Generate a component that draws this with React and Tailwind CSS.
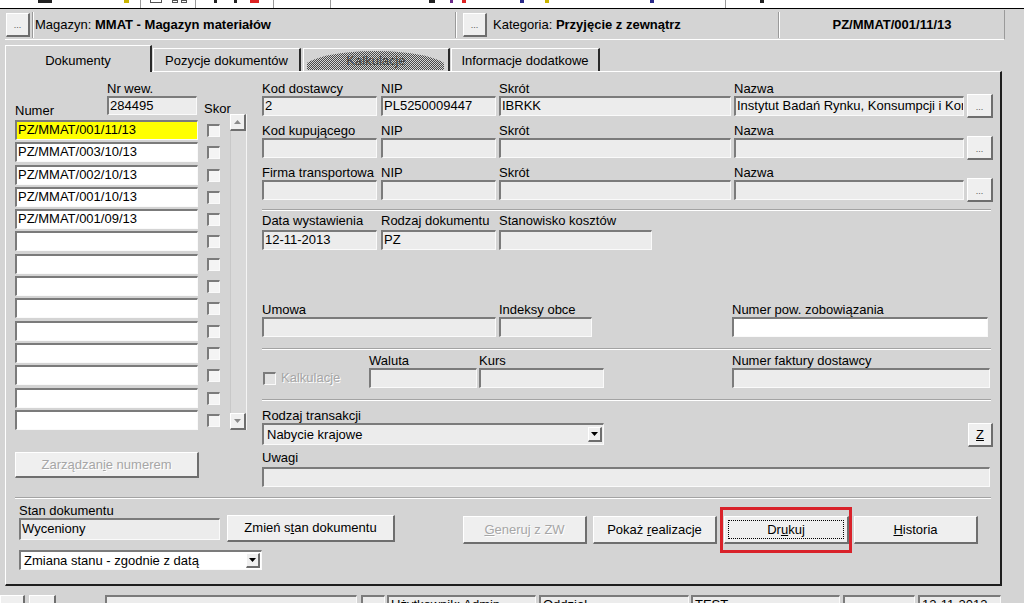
const sunken =
  'border-t-2 border-l-2 border-t-[#7b7b7b] border-l-[#7b7b7b] border-b border-r border-b-[#fafafa] border-r-[#fafafa]';
const raised =
  'border-t border-l border-t-white border-l-white border-b-2 border-r-2 border-b-[#6e6e6e] border-r-[#6e6e6e]';
const disabledText = 'text-[#a6a6a6] [text-shadow:1px_1px_0_#ffffff]';

function Field({ className = '', white = false, children }) {
  return (
    <div
      className={`${sunken} ${white ? 'bg-white' : 'bg-[#ececec]'} pl-[1px] text-[13px] leading-[16px] whitespace-nowrap overflow-hidden ${className}`}
    >
      {children}
    </div>
  );
}

function Btn({ className = '', disabled = false, focus = false, children }) {
  return (
    <div
      className={`relative bg-[#efefef] ${raised} flex items-center justify-center text-[13px] leading-[16px] whitespace-nowrap ${
        disabled ? disabledText : 'text-black'
      } ${className}`}
    >
      {focus && <div className="absolute inset-[3px] border border-dotted border-black" />}
      <span className="relative">{children}</span>
    </div>
  );
}

function Dots() {
  return (
    <Btn className="w-[26px] h-[24px]">
      <span className="text-[9px] leading-none text-[#555]">...</span>
    </Btn>
  );
}

function Arrow({ up = false, color = '#000' }) {
  return (
    <svg width="7" height="4" viewBox="0 0 7 4">
      <path d={up ? 'M0 4h7L3.5 0z' : 'M0 0h7L3.5 4z'} fill={color} />
    </svg>
  );
}

function Select({ className = '', white = false, children }) {
  return (
    <div
      className={`${sunken} ${white ? 'bg-white' : 'bg-[#ececec]'} flex items-center justify-between pl-[3px] pr-[1px] ${className}`}
    >
      <span className="text-[13px] leading-[16px] whitespace-nowrap">{children}</span>
      <div className={`w-[14px] h-[15px] bg-[#efefef] ${raised} flex items-center justify-center`}>
        <Arrow />
      </div>
    </div>
  );
}

function Check({ disabled = false }) {
  return (
    <div
      className={`w-[13px] h-[13px] ${sunken} ${disabled ? 'bg-[#e2e2e2]' : 'bg-[#f4f4f4]'}`}
    />
  );
}

function Sep({ className = '' }) {
  return <div className={`h-[2px] border-t border-t-[#a3a3a3] border-b border-b-white ${className}`} />;
}

function Label({ className = '', children }) {
  return <div className={`text-[13px] leading-[15px] h-[15px] whitespace-nowrap ${className}`}>{children}</div>;
}

const ROWS = [
  'PZ/MMAT/001/11/13',
  'PZ/MMAT/003/10/13',
  'PZ/MMAT/002/10/13',
  'PZ/MMAT/001/10/13',
  'PZ/MMAT/001/09/13',
  '', '', '', '', '', '', '', '', '',
];

const PARTIES = [
  ['Kod dostawcy', '2', 'PL5250009447', 'IBRKK', 'Instytut Badań Rynku, Konsumpcji i Kor'],
  ['Kod kupującego', '', '', '', ''],
  ['Firma transportowa', '', '', '', ''],
];

function Toolbar() {
  return (
    <div className="relative h-[9px] bg-white border-b border-b-black overflow-hidden">
      <div className="absolute left-[38px] top-0 w-[14px] h-[3px] bg-[#222]" />
      <div className="absolute left-[124px] top-0 w-[5px] h-[3px] bg-[#c9b400]" />
      <div className="absolute left-[140px] top-0 w-[1px] h-[8px] bg-[#9a9a9a]" />
      <div className="absolute left-[150px] top-0 w-[12px] h-[3px] border-b border-x border-[#555]" />
      <div className="absolute left-[172px] top-0 w-[6px] h-[3px] border border-[#555]" />
      <div className="absolute left-[181px] top-0 w-[6px] h-[3px] border border-[#555]" />
      <div className="absolute left-[195px] top-0 w-[1px] h-[8px] bg-[#9a9a9a]" />
      <div className="absolute left-[214px] top-0 w-[3px] h-[3px] bg-[#222]" />
      <div className="absolute left-[234px] top-0 w-[3px] h-[3px] bg-[#222]" />
      <div className="absolute left-[250px] top-0 w-[9px] h-[3px] bg-[#d22]" />
      <div className="absolute left-[273px] top-0 w-[1px] h-[8px] bg-[#9a9a9a]" />
      <div className="absolute left-[330px] top-0 w-[1px] h-[8px] bg-[#9a9a9a]" />
      <div className="absolute left-[429px] top-0 w-[6px] h-[3px] bg-[#222]" />
      <div className="absolute left-[450px] top-0 w-[3px] h-[3px] bg-[#6a2a8a]" />
      <div className="absolute left-[462px] top-0 w-[4px] h-[3px] bg-[#d22]" />
      <div className="absolute left-[520px] top-0 w-[4px] h-[3px] bg-[#2a2a8a]" />
      <div className="absolute left-[545px] top-0 w-[4px] h-[3px] bg-[#c9b400]" />
      <div className="absolute left-[650px] top-0 w-[4px] h-[3px] bg-[#2a2a8a]" />
      <div className="absolute left-[725px] top-0 w-[1px] h-[8px] bg-[#9a9a9a]" />
      <div className="absolute left-[760px] top-0 w-[4px] h-[3px] bg-[#222]" />
    </div>
  );
}

function Header() {
  return (
    <div className="ml-[5px] mt-[1px] w-[1000px] h-[30px] flex items-center border-b border-b-white border-r border-r-[#9a9a9a]">
      <div className="ml-[1px]">
        <Btn className="w-[24px] h-[24px]">
          <span className="text-[9px] leading-none text-[#555]">...</span>
        </Btn>
      </div>
      <div className="ml-[2px] w-[2px] h-[26px] border-l border-l-[#9a9a9a] border-r border-r-white" />
      <div className="ml-[1px] w-[420px] whitespace-nowrap">
        Magazyn: <span className="font-bold">MMAT - Magazyn materiałów</span>
      </div>
      <div className="w-[2px] h-[26px] border-l border-l-[#9a9a9a] border-r border-r-white" />
      <div className="ml-[6px]">
        <Btn className="w-[24px] h-[24px]">
          <span className="text-[9px] leading-none text-[#555]">...</span>
        </Btn>
      </div>
      <div className="ml-[6px] w-[285px] whitespace-nowrap">
        Kategoria: <span className="font-bold">Przyjęcie z zewnątrz</span>
      </div>
      <div className="w-[2px] h-[26px] border-l border-l-[#9a9a9a] border-r border-r-white" />
      <div className="flex-1 text-center font-bold">PZ/MMAT/001/11/13</div>
    </div>
  );
}

function Tabs() {
  const tab = 'h-[23px] pt-[4px] flex justify-center border-t border-l border-t-white border-l-white border-r-2 border-r-[#2a2a2a]';
  return (
    <div className="relative z-10 ml-[5px] mt-[5px] h-[26px] flex items-end gap-[1px]">
      <div className="w-[147px] h-[27px] -mb-[1px] pt-[7px] flex justify-center bg-[#d4d4d4] border-t border-l border-t-white border-l-white border-r-2 border-r-[#2a2a2a]">
        Dokumenty
      </div>
      <div className={`w-[148px] ${tab}`}>Pozycje dokumentów</div>
      <div className={`relative w-[147px] ml-[1px] ${tab}`}>
        <div className="absolute left-[3px] right-[4px] top-[2px] bottom-[1px] bg-[image:repeating-conic-gradient(#4a4a4a_0_25%,transparent_0_50%)] bg-[length:2px_2px] [clip-path:ellipse(54%_100%_at_50%_100%)]" />
        <span className="relative text-[#444]">Kalkulacje</span>
      </div>
      <div className={`w-[149px] ${tab}`}>Informacje dodatkowe</div>
    </div>
  );
}

function LeftColumn() {
  return (
    <div className="w-[232px]">
      <div className="h-[48px] flex">
        <div className="w-[92px] flex flex-col justify-end pb-[2px]">
          <Label>Numer</Label>
        </div>
        <div className="w-[90px] pt-[9px]">
          <Label>Nr wew.</Label>
          <Field className="h-[19px] !leading-[15px]">284495</Field>
        </div>
        <div className="pl-[7px] flex flex-col justify-end pb-[4px]">
          <Label>Skor</Label>
        </div>
      </div>
      <div className="flex items-start">
        <div className="w-[183px]">
          {ROWS.map((r, i) => (
            <div key={i} className="h-[22.3px]">
              <Field white className={`h-[20px] ${i === 0 ? '!bg-[#ffff00]' : ''}`}>
                {r}
              </Field>
            </div>
          ))}
        </div>
        <div className="w-[32px]">
          {ROWS.map((_, i) => (
            <div key={i} className="h-[22.3px] pt-[4px] pl-[9px]">
              <Check />
            </div>
          ))}
        </div>
        <div className="w-[17px] h-[316px] -mt-[6px] flex flex-col bg-[#d9d9d9] border-r border-r-[#f4f4f4]">
          <div className={`h-[17px] bg-[#efefef] ${raised} flex items-center justify-center`}>
            <Arrow up color="#8a8a8a" />
          </div>
          <div className="flex-1 border-l border-l-[#c8c8c8]" />
          <div className={`h-[17px] bg-[#efefef] ${raised} flex items-center justify-center`}>
            <Arrow color="#8a8a8a" />
          </div>
        </div>
      </div>
      <Btn disabled className="mt-[20px] w-[184px] h-[26px]">
        Zarządzan<span className="underline">i</span>e numerem
      </Btn>
    </div>
  );
}

function RightColumn() {
  return (
    <div className="ml-[15px] w-[731px] pt-[9px]">
      {PARTIES.map(([label, kod, nip, skrot, nazwa], i) => (
        <div key={label} className={i < 2 ? 'mb-[7px]' : ''}>
          <div className="flex">
            <Label className="w-[119px]">{label}</Label>
            <Label className="w-[118px]">NIP</Label>
            <Label className="w-[235px]">Skrót</Label>
            <Label>Nazwa</Label>
          </div>
          <div className="h-[20px] flex items-center">
            <Field className="w-[115px] h-[20px]">{kod}</Field>
            <Field className="ml-[4px] w-[115px] h-[20px]">{nip}</Field>
            <Field className="ml-[3px] w-[232px] h-[20px]">{skrot}</Field>
            <Field className="ml-[3px] w-[230px] h-[20px]">{nazwa}</Field>
            <div className="ml-[3px]">
              <Dots />
            </div>
          </div>
        </div>
      ))}

      <Sep className="mt-[9px] w-[729px]" />

      <div className="mt-[2px] flex">
        <Label className="w-[119px]">Data wystawienia</Label>
        <Label className="w-[118px]">Rodzaj dokumentu</Label>
        <Label>Stanowisko kosztów</Label>
      </div>
      <div className="mt-[2px] flex">
        <Field className="w-[115px] h-[20px]">12-11-2013</Field>
        <Field className="ml-[4px] w-[115px] h-[20px]">PZ</Field>
        <Field className="ml-[3px] w-[153px] h-[20px]" />
      </div>

      <div className="mt-[52px] flex">
        <Label className="w-[237px]">Umowa</Label>
        <Label className="w-[233px]">Indeksy obce</Label>
        <Label>Numer pow. zobowiązania</Label>
      </div>
      <div className="flex">
        <Field className="w-[234px] h-[20px]" />
        <Field className="ml-[3px] w-[93px] h-[20px]" />
        <Field white className="ml-[140px] w-[256px] h-[20px]" />
      </div>

      <Sep className="mt-[11px] w-[729px]" />

      <div className="mt-[4px] flex">
        <div className="w-[107px]" />
        <Label className="w-[110px] !h-[14px] !leading-[14px]">Waluta</Label>
        <Label className="w-[253px] !h-[14px] !leading-[14px]">Kurs</Label>
        <Label className="!h-[14px] !leading-[14px]">Numer faktury dostawcy</Label>
      </div>
      <div className="h-[20px] flex items-center">
        <div className="w-[107px] flex items-center pl-[1px]">
          <Check disabled />
          <span className={`ml-[5px] ${disabledText}`}>Kalkulacje</span>
        </div>
        <Field className="w-[108px] h-[20px]" />
        <Field className="ml-[2px] w-[125px] h-[20px]" />
        <Field className="ml-[128px] w-[258px] h-[20px]" />
      </div>

      <Sep className="mt-[11px] w-[729px]" />

      <Label className="mt-[8px] !h-[14px] !leading-[14px]">Rodzaj transakcji</Label>
      <div className="h-[22px] flex items-start">
        <Select className="w-[342px] h-[22px]">Nabycie krajowe</Select>
        <Btn className="ml-[364px] w-[25px] h-[24px]">
          <span className="underline">Z</span>
        </Btn>
      </div>

      <Label className="mt-[5px]">Uwagi</Label>
      <Field className="mt-[2px] w-[728px] h-[20px]" />
    </div>
  );
}

function BottomSection() {
  return (
    <div className="flex pl-[13px]">
      <div className="w-[376px] pt-[5px]">
        <Label className="!h-[14px] !leading-[14px]">Stan dokumentu</Label>
        <div className="flex items-start">
          <Field className="w-[201px] h-[22px] !leading-[18px]">Wyceniony</Field>
          <Btn className="ml-[7px] -mt-[3px] w-[168px] h-[27px]">
            Zmień s<span className="underline">t</span>an dokumentu
          </Btn>
        </div>
        <Select white className="mt-[8px] w-[243px] h-[20px]">
          Zmiana stanu - zgodnie z datą
        </Select>
      </div>
      <div className="ml-[68px] mt-[17px] flex items-start">
        <Btn disabled className="w-[124px] h-[28px]">
          <span className="underline">G</span>eneruj z ZW
        </Btn>
        <Btn className="ml-[6px] w-[124px] h-[28px]">
          Pokaż <span className="underline">r</span>ealizacje
        </Btn>
        <div className="relative ml-[7px]">
          <Btn focus className="w-[125px] h-[28px]">
            Dr<span className="underline">u</span>kuj
          </Btn>
          <div className="absolute -left-[4px] -top-[9px] w-[132px] h-[46px] border-[3px] border-[#d9222a]" />
        </div>
        <Btn className="ml-[5px] w-[124px] h-[28px]">
          <span className="underline">H</span>istoria
        </Btn>
      </div>
    </div>
  );
}

function StatusBar() {
  const box = `${sunken} bg-[#ececec] h-[20px] text-[13px] leading-[16px] pl-[2px] whitespace-nowrap overflow-hidden`;
  return (
    <div className="pt-[9px] flex items-start">
      <Btn className="w-[25px] h-[20px]">
        <span className="text-[#2a3fb8] text-[12px] font-bold leading-none">‹</span>
      </Btn>
      <Btn className="ml-[4px] w-[27px] h-[20px]">
        <span className="text-[#2a3fb8] text-[12px] font-bold leading-none">›</span>
      </Btn>
      <div className={`ml-[49px] w-[252px] ${box}`} />
      <div className={`ml-[4px] w-[24px] ${box}`} />
      <div className={`ml-[2px] w-[149px] ${box}`}>Użytkownik: Admin</div>
      <div className={`ml-[3px] w-[150px] ${box}`}>Oddział</div>
      <div className={`ml-[2px] w-[149px] ${box}`}>TEST</div>
      <div className={`ml-[3px] w-[72px] ${box}`} />
      <div className={`ml-[3px] w-[83px] ${box}`}>12-11-2013</div>
    </div>
  );
}

export default function App() {
  return (
    <div className="w-[1024px] h-[603px] overflow-hidden bg-[#d4d4d4] font-['Liberation_Sans',Arial,sans-serif] text-[13px] leading-[16px] text-black">
      <Toolbar />
      <Header />
      <Tabs />
      {/* tab page */}
      <div className="ml-[5px] w-[997px] h-[515px] border-t border-l border-t-white border-l-white border-r-2 border-b-2 border-r-[#1e1e1e] border-b-[#1e1e1e]">
        <div className="flex pl-[9px]">
          <LeftColumn />
          <RightColumn />
        </div>
        <Sep className="ml-[9px] mt-[10px] w-[976px]" />
        <BottomSection />
      </div>
      <StatusBar />
    </div>
  );
}
